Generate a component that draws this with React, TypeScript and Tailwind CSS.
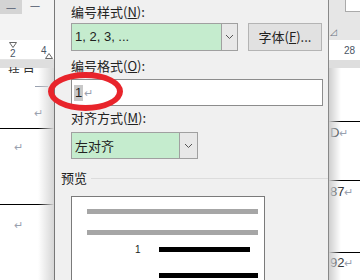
const cjk = { fontFamily: '"Microsoft YaHei", "Noto Sans CJK SC", sans-serif' };
const latin = { fontFamily: 'Arial, "Liberation Sans", sans-serif' };

const Ret = ({ className = '' }: { className?: string }) => (
  <span className={`text-[11px] leading-none text-gray-400 ${className}`}>↵</span>
);

const Label = ({ text, k }: { text: string; k: string }) => (
  <div className="text-[13px] leading-4 text-[#222]" style={cjk}>
    {text}(<span className="underline">{k}</span>):
  </div>
);

const Arrow = () => (
  <svg width="9" height="6" viewBox="0 0 9 6" fill="none">
    <path d="M1 1l3.5 3.5L8 1" stroke="#555" strokeWidth="1" />
  </svg>
);

// tab markers on the ruler
const Marker = ({ up = false }: { up?: boolean }) => (
  <svg width="8" height="6" viewBox="0 0 8 6" fill="none">
    <path d={up ? 'M4 0.5L7.5 5.5H0.5Z' : 'M0.5 0.5H7.5L4 5.5Z'} stroke="#666" strokeWidth="1" fill="white" />
  </svg>
);

const LeftDoc = () => (
  <div className="relative w-[54px] h-[280px] bg-white overflow-hidden shrink-0">
    <div className="h-[14px] bg-[#f3f3f3] flex items-start">
      <div className="w-[22px] h-[14px] bg-[#d4d4d4] flex items-center justify-center text-[10px] text-gray-500">—</div>
      <div className="ml-[8px] text-[10px] text-gray-500 leading-[10px]">—</div>
    </div>
    <div className="h-[26px] bg-[#f3f3f3]" />
    <div className="relative h-[20px] bg-white border-b border-[#e4e4e4]">
      <div className="absolute left-[9px] top-[2px]"><Marker /></div>
      <span className="absolute left-[10px] top-[9px] text-[10px] text-gray-600 leading-none" style={latin}>2</span>
      <span className="absolute left-[41px] top-[6px] text-[10px] text-gray-600 leading-none" style={latin}>4</span>
      <div className="absolute left-[45px] top-[13px]"><Marker up /></div>
    </div>
    <div className="h-[8px] bg-[#dedede]" />
    <div className="flex flex-col">
      <div className="h-[8px] -mt-[3px] pl-[8px] text-[12px] leading-4 text-[#333] overflow-hidden" style={cjk}>技 目</div>
      <div className="h-[13px]" />
      <div className="ml-[35px] w-[13px] border-t border-gray-400" />
      <div className="h-[12px]" />
      <div className="pl-[34px]"><Ret /></div>
      <div className="h-[5px]" />
      <div className="border-t border-black" />
      <div className="pl-[14px] mt-[4px]"><Ret /></div>
      <div className="h-[47px]" />
      <div className="border-t border-black" />
      <div className="pl-[14px] mt-[6px]"><Ret /></div>
      <div className="h-[71px]" />
      <div className="border-t border-black" />
      <div className="pl-[14px] mt-[3px]"><Ret /></div>
    </div>
    <div className="absolute top-[68px] bottom-0 right-0 w-[16px] bg-gradient-to-r from-transparent to-[#d6d6d6]" />
  </div>
);

const RightDoc = () => (
  <div className="relative w-[32px] h-[280px] bg-white overflow-hidden shrink-0 border-l border-[#888]">
    <div className="h-[40px] bg-[#e6e6e6] relative">
      <div className="absolute left-[16px] top-0 w-[20px] h-[12px] bg-white border border-[#aaa] border-t-0" />
      <span className="absolute left-[1px] top-[27px] text-[9px] text-gray-500 leading-none">◿</span>
    </div>
    <div className="h-[20px] bg-white flex items-center pl-[15px] text-[10px] text-gray-600" style={latin}>28</div>
    <div className="h-[8px] bg-[#dedede]" />
    <div className="flex flex-col text-[13px] leading-4 text-[#333]" style={latin}>
      <div className="h-[53px]" />
      <div className="border-t border-black" />
      <div className="pl-[1px] mt-[3px]">D<Ret /></div>
      <div className="h-[39px]" />
      <div className="border-t border-black" />
      <div className="pl-[1px] mt-[3px]">87<Ret /></div>
      <div className="h-[52px]" />
      <div className="border-t border-black" />
      <div className="pl-[1px] mt-[2px]">92<Ret /></div>
    </div>
    <div className="absolute top-[68px] bottom-0 left-0 w-[12px] bg-gradient-to-r from-[#cfcfcf] to-transparent" />
  </div>
);

const Dialog = () => (
  <div className="relative w-[274px] h-[280px] bg-[#f0f0f0] border-l border-[#777] shrink-0 overflow-hidden">
    <div className="pl-[16px] pt-[4px]">
      <Label text="编号样式" k="N" />
      <div className="flex items-start mt-[3px]">
        <div className="flex w-[167px] h-[28px] border border-[#a0a0a0]">
          <div className="flex-1 bg-[#c5ecce] flex items-center pl-[3px] text-[13px] text-[#222] whitespace-pre" style={latin}>1, 2, 3, ...</div>
          <div className="w-[16px] bg-[#e8e8e8] border-l border-[#a0a0a0] flex items-center justify-center"><Arrow /></div>
        </div>
        <div className="ml-[10px] w-[74px] h-[28px] border border-[#b4b4b4] bg-[#e1e1e1] flex items-center justify-center text-[13px] text-[#222]" style={cjk}>
          字体(<span className="underline">F</span>)...
        </div>
      </div>
      <div className="mt-[7px]"><Label text="编号格式" k="O" /></div>
      <div className="mt-[5px] w-[252px] h-[27px] border border-[#8c8c8c] bg-white flex items-center pl-[2px]">
        <span className="bg-[#c8c8c8] text-[13px] leading-4 text-[#222] px-[1px]" style={latin}>1</span>
        <Ret className="ml-[1px]" />
      </div>
      <div className="mt-[4px]"><Label text="对齐方式" k="M" /></div>
      <div className="mt-[6px] flex w-[127px] h-[27px] border border-[#a0a0a0]">
        <div className="flex-1 bg-[#c5ecce] flex items-center pl-[3px] text-[13px] text-[#222]" style={cjk}>左对齐</div>
        <div className="w-[18px] bg-[#e8e8e8] border-l border-[#a0a0a0] flex items-center justify-center"><Arrow /></div>
      </div>
    </div>
    <div className="mt-[11px] pl-[6px] flex items-center gap-[4px]">
      <span className="text-[13px] leading-4 text-[#222]" style={cjk}>预览</span>
      <div className="flex-1 border-t border-[#dcdcdc]" />
    </div>
    <div className="ml-[16px] mt-[10px] w-[194px] h-[100px] bg-white border border-[#7a7a7a] pt-[12px] pl-[15px]">
      <div className="w-[171px] h-[5px] bg-[#a6a6a6]" />
      <div className="mt-[16px] w-[171px] h-[5px] bg-[#a6a6a6]" />
      <div className="mt-[12px] flex items-start">
        <span className="w-[72px] pl-[48px] -mt-[3px] text-[10px] leading-3 text-[#222]" style={latin}>1</span>
        <div className="w-[91px] h-[5px] bg-black" />
      </div>
      <div className="mt-[17px] ml-[72px] w-[99px] h-[5px] bg-black" />
    </div>
  </div>
);

export default function App() {
  return (
    <div className="relative w-[360px] h-[280px] flex overflow-hidden bg-white">
      <LeftDoc />
      <Dialog />
      <RightDoc />
      <div className="absolute left-[48px] top-[72px] w-[75px] h-[39px] rounded-[50%] border-[6px] border-[#e8242b]" />
    </div>
  );
}
